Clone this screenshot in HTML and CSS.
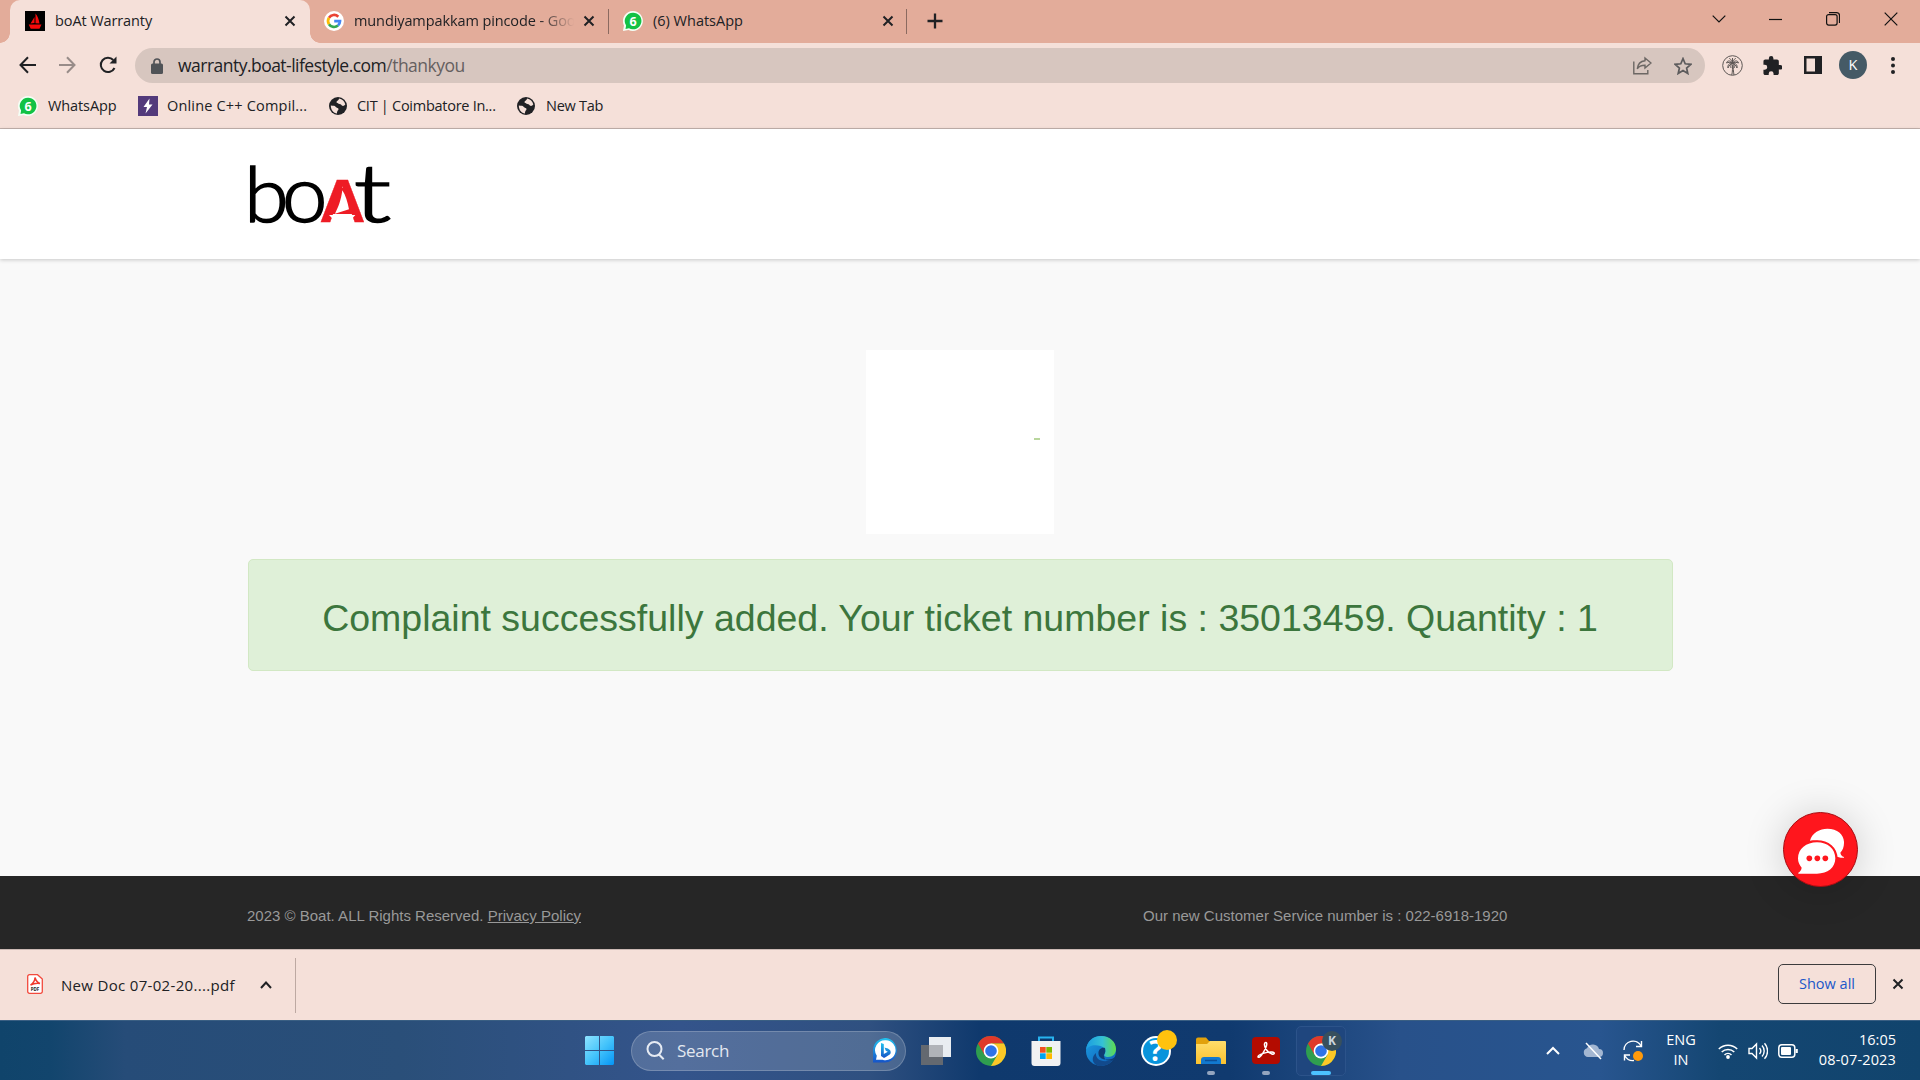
FILE: index.html
```html
<!DOCTYPE html>
<html lang="en">
<head>
<meta charset="utf-8">
<title>boAt Warranty</title>
<link rel="stylesheet" href="styles.css">
</head>
<body>
<svg class="defs" width="0" height="0" aria-hidden="true">
  <defs>
    <linearGradient id="win" x1="0" y1="0" x2="1" y2="1"><stop offset="0" stop-color="#8fe3ff"/><stop offset=".5" stop-color="#45c4fb"/><stop offset="1" stop-color="#0595f5"/></linearGradient>
    <linearGradient id="edgeA" x1="0" y1="0" x2="1" y2="0"><stop offset="0" stop-color="#1b9de2"/><stop offset=".55" stop-color="#35c1d5"/><stop offset="1" stop-color="#5fdc4b"/></linearGradient>
    <linearGradient id="edgeB" x1="0" y1="0" x2="1" y2="1"><stop offset="0" stop-color="#1b9de2"/><stop offset="1" stop-color="#0f5fb8"/></linearGradient>
    <linearGradient id="folder" x1="0" y1="0" x2="0" y2="1"><stop offset="0" stop-color="#ffdd6b"/><stop offset="1" stop-color="#fbc22f"/></linearGradient>
    <linearGradient id="bing" x1="0" y1="0" x2="0" y2="1"><stop offset="0" stop-color="#22c3ee"/><stop offset="1" stop-color="#1553c8"/></linearGradient>
    <symbol id="close" viewBox="0 0 12 12"><path d="M1.500 1.500l9 9M10.500 1.500l-9 9" stroke="currentColor" stroke-width="2" fill="none"/></symbol>
    <symbol id="wa" viewBox="0 0 20 20"><path d="M10 0a10 10 0 1 1-4.500 19L0 20l1-5.500A10 10 0 0 1 10 0z" fill="#f4fff6"/><path d="M10 1.700a8.300 8.300 0 1 1-4 15.500L2.500 18l.6-3.500A8.300 8.300 0 0 1 10 1.700z" fill="#12c245"/><text x="10" y="14.500" text-anchor="middle" font-size="12.500" font-weight="700" fill="#fff">6</text></symbol>
    <symbol id="globe" viewBox="0 0 20 20"><circle cx="10" cy="10" r="9" fill="#202124"/><path d="M2.800 9.500c3 .2 4.200.3 5 1.500.7 1.200 2.500.5 2.700 2 .1 1.300-1.500 1.500-1.500 4.600C5.500 17.200 2.800 14 2.800 9.500zM11 2.600c3.300.4 5.600 2.700 6.300 5.900-1 1.500-2.600 1.700-3.400 1-.7-.7-.9-1.500-2.400-1.500-1.200 0-1.400-1.300-2.800-1.300-.8-2 2.300-1.800 2.300-4.100z" fill="#f5e0d9"/></symbol>
    <symbol id="chrome" viewBox="0 0 30 30"><circle cx="15" cy="15" r="15" fill="#2f9e4f"/><path d="M2 7.500A15 15 0 0 1 28 7.500H15L8.500 18.800z" fill="#e0392b"/><path d="M28 7.500A15 15 0 0 1 15 30l6.500-11.300L15 7.500z" fill="#fcc827"/><circle cx="15" cy="15" r="7.400" fill="#fff"/><circle cx="15" cy="15" r="5.800" fill="#2f73e8"/></symbol>
  </defs>
</svg>

<div class="tabstrip">
  <div class="tab tab-active">
    <svg class="fav" viewBox="0 0 20 20"><path d="M0 0h20v20H0z"/><path d="M10.500 2.500v9.800l4 .3c-.4-4-2-7.600-4-10.100zM9.500 6l-4 6.500 4-.5zM3.700 13.500h12.800l-2 4.300H5.700z" fill="#f50a0a"/></svg>
    <span class="tab-title t-boat">boAt Warranty</span>
    <svg class="tab-x"><use href="#close"/></svg>
  </div>
  <div class="tab tab-google">
    <svg class="fav" viewBox="0 0 20 20"><circle cx="10" cy="10" r="10" fill="#fff"/><g fill="none" stroke-width="2.700"><path d="M5 6.800A6 6 0 0 1 14.300 5.700" stroke="#ea4335"/><path d="M5 13.200a6 6 0 0 1 0-6.400" stroke="#fbbc05"/><path d="M14 14.500A6 6 0 0 1 5 13.200" stroke="#34a853"/><path d="M10.200 10.200H16a6 6 0 0 1-2 4.300" stroke="#4285f4"/></g></svg>
    <span class="tab-title t-google">mundiyampakkam pincode - Goo</span>
    <svg class="tab-x"><use href="#close"/></svg>
  </div>
  <div class="tab tab-wa">
    <svg class="fav"><use href="#wa"/></svg>
    <span class="tab-title t-wa">(6) WhatsApp</span>
    <svg class="tab-x"><use href="#close"/></svg>
  </div>
  <svg class="plus" viewBox="0 0 16 16"><path d="M8 .5v15M.5 8h15" stroke="#202124" stroke-width="2.300"/></svg>
  <div class="win-controls">
    <svg width="14" height="8" viewBox="0 0 14 8"><path d="M.7.700L7 7 13.300.7" /></svg>
    <svg width="13" height="14" viewBox="0 0 13 14"><path d="M0 7.500h13"/></svg>
    <svg width="14" height="14" viewBox="0 0 14 14"><rect x=".6" y="2.600" width="10.500" height="10.500" rx="2"/><path d="M3 .6h7.500a3 3 0 0 1 3 3V11"/></svg>
    <svg width="14" height="14" viewBox="0 0 14 14"><path d="M.7.700l12.600 12.600M13.300.7L.7 13.300"/></svg>
  </div>
</div>

<div class="toolbar">
  <svg class="nav" width="17" height="18" viewBox="0 0 17 18"><path d="M17 9H1.500M9 1.300L1.500 9 9 16.700"/></svg>
  <svg class="nav nav-off" width="17" height="18" viewBox="0 0 17 18"><path d="M0 9h15.500M8 1.300L15.500 9 8 16.700"/></svg>
  <svg class="nav" width="18" height="18" viewBox="0 0 18 18"><path d="M15.500 12A7.200 7.200 0 1 1 14.300 4"/><path d="M17.500.5v7h-7z" fill="#202124" stroke="none"/></svg>
  <div class="omnibox">
    <svg width="12" height="16" viewBox="0 0 12 16"><rect y="5.500" width="12" height="10.500" rx="1.500" fill="#505357"/><path d="M3 6V4a3 3 0 0 1 6 0v2" fill="none" stroke="#505357" stroke-width="1.700"/></svg>
    <span class="url">warranty.boat-lifestyle.com<span class="path">/thankyou</span></span>
    <svg class="share" width="19" height="19" viewBox="0 0 19 19"><g fill="none" stroke="#6c6764" stroke-width="1.400"><path d="M.8 5.500v12.300h14V14"/><path d="M12 2l6 5-6 5V9.300c-4 0-6.200 1-7.700 3.500C4.700 8.500 7.500 5.200 12 4.700z"/></g></svg>
    <svg width="18" height="18" viewBox="0 0 18 18"><path d="M9 1.600l2.200 5.200 5.600.5-4.200 3.700 1.200 5.500L9 13.600l-4.800 2.900L5.400 11 1.200 7.300l5.600-.5z" fill="none" stroke="#5c5b5c" stroke-width="1.700"/></svg>
  </div>
  <svg class="palm" width="21" height="21" viewBox="0 0 21 21"><g fill="none" stroke="#5d5755"><circle cx="10.500" cy="10.500" r="9.800"/><path d="M9.800 20c.8-4 .8-7 .5-10.500M12 20c-.7-4-.8-7-1-10.500M10.500 8C8 5 5 5.500 4.500 8c2-1 4-.5 6 0C7 8 5.500 10 6 13c1-2.500 2.500-4 4.500-5C9 4 8 3.500 7 3.500M10.500 8c2.500-3 5.500-2.500 6 0-2-1-4-.5-6 0 3.500 0 5 2 4.500 5-1-2.500-2.500-4-4.500-5 1.500-4 2.500-4.500 3.500-4.500M10.500 8V3M10.500 8c-2 2-2 3-1.500 5M10.500 8c2 2 2 3 1.700 5"/></g></svg>
  <svg class="puzzle" width="19" height="19" viewBox="1.500 1 21 21"><path d="M20.500 11H19V7c0-1.100-.9-2-2-2h-4V3.500a2.500 2.500 0 0 0-5 0V5H4c-1.100 0-2 .9-2 2v3.800h1.500a2.700 2.700 0 0 1 0 5.400H2V20c0 1.100.9 2 2 2h3.800v-1.500a2.700 2.700 0 0 1 5.400 0V22H17c1.100 0 2-.9 2-2v-4h1.500a2.500 2.500 0 0 0 0-5z" fill="#202124"/></svg>
  <svg class="panel" width="18" height="18" viewBox="0 0 18 18"><path d="M0 0h18v18H0zM2.500 2.500v13H11v-13z" fill="#202124" fill-rule="evenodd"/></svg>
  <div class="avatar">K</div>
  <svg class="dots" width="4" height="17" viewBox="0 0 4 17"><g fill="#202124"><circle cx="2" cy="2" r="2"/><circle cx="2" cy="8.500" r="2"/><circle cx="2" cy="15" r="2"/></g></svg>
</div>

<div class="bookmarks">
  <div class="bm bm1"><svg class="bi"><use href="#wa"/></svg><span>WhatsApp</span></div>
  <div class="bm bm2"><svg class="bi" viewBox="0 0 20 20"><path d="M0 0h20v20H0z" fill="#533a7b"/><path d="M11.500 2.500L5.500 11H9l-1.500 6.500L14.500 8.500H11z" fill="#fff"/></svg><span>Online C++ Compil...</span></div>
  <div class="bm bm3"><svg class="bi"><use href="#globe"/></svg><span>CIT | Coimbatore In...</span></div>
  <div class="bm bm4"><svg class="bi"><use href="#globe"/></svg><span>New Tab</span></div>
</div>

<header class="site-header">
  <svg class="logo" width="140" height="62" viewBox="60 70 420 186">
    <text class="logo-text" y="246"><tspan x="43" font-size="230" textLength="133" lengthAdjust="spacingAndGlyphs">b</tspan><tspan x="156" font-size="236" textLength="136" lengthAdjust="spacingAndGlyphs">o</tspan><tspan class="logo-a" x="268" font-size="184" textLength="139" lengthAdjust="spacingAndGlyphs">A</tspan><tspan x="371" font-size="244" textLength="112" lengthAdjust="spacingAndGlyphs">t</tspan></text>
    <path d="M318 145h40l20 78H298z" fill="#ee1c25"/>
    <path d="M337 152c10 15 16 35 20 57l-42 13c10-20 18-40 22-70zM297 226h79l-10 11 6 12h-70l6-12z" fill="#fff"/>
  </svg>
</header>

<main class="content">
  <div class="status"><i></i></div>
  <div class="alert">Complaint successfully added. Your ticket number is : 35013459. Quantity : 1</div>
  <div class="chat">
    <svg width="46" height="46" viewBox="0 0 138 138"><path d="M36 38C42 14 66 2 88 2c32 0 51 19 50 43 0 12-4 22-11 29 1 7 5 11 11 13v2c-9 1-18-1-25-6C110 55 78 34 36 38z" fill="#fff"/><path d="M57 43c32 0 55 20 55 48s-23 46-55 46H1v-3c5-3 9-8 10-15C4 111 0 102 0 91c0-28 25-48 57-48z" fill="#fff" stroke="#ff161d" stroke-width="13" paint-order="stroke"/><g fill="#ff161d"><circle cx="34" cy="91" r="8.500"/><circle cx="58" cy="91" r="8.500"/><circle cx="82" cy="91" r="8.500"/></g></svg>
  </div>
</main>

<footer class="site-footer">
  <p class="copy">2023 © Boat. ALL Rights Reserved. <a>Privacy Policy</a></p>
  <p class="service">Our new Customer Service number is : 022-6918-1920</p>
</footer>

<div class="downloads">
  <svg class="pdf" width="16" height="20" viewBox="0 0 16 20"><path d="M2.500.7h8L15.300 5v12.500a1.800 1.800 0 0 1-1.800 1.800h-11a1.800 1.800 0 0 1-1.800-1.800v-15A1.800 1.800 0 0 1 2.500.7z" fill="#fff" stroke="#f24a3d" stroke-width="1.300"/><path d="M8 3.500c1 3.500 2 5 5 6-3-.6-6-.3-9.500 1.700C6.500 9 8 6.500 8 3.500z" fill="none" stroke="#f03a2e" stroke-width="1.500"/><text x="8" y="16.500" text-anchor="middle" font-size="4.500" font-weight="700" fill="#222">PDF</text></svg>
  <span class="dl-name">New Doc 07-02-20....pdf</span>
  <svg class="dl-up" width="12" height="8" viewBox="0 0 12 8"><path d="M1 7l5-5.500L11 7" fill="none" stroke="#202124" stroke-width="2"/></svg>
  <i class="dl-sep"></i>
  <span class="show-all">Show all</span>
  <svg class="dl-x"><use href="#close"/></svg>
</div>

<div class="taskbar">
  <svg class="start" width="29" height="29" viewBox="0 0 29 29"><path d="M1 0h13v14H0V1zM15 0h13l1 1v13H15zM0 15h14v14H1l-1-1zM15 15h14v13l-1 1H15z" fill="url(#win)"/></svg>
  <div class="search">
    <svg width="19" height="19" viewBox="0 0 19 19"><path d="M12.700 13.200l5 5M15.500 8a7 7 0 1 1-14 0 7 7 0 0 1 14 0z" fill="none" stroke="#e6ebf3" stroke-width="2"/></svg>
    <span>Search</span>
    <svg class="bing" width="25" height="25" viewBox="0 0 25 25"><path d="M13 0a12 12 0 1 1-3 24.500H0V12A12.500 12.500 0 0 1 13 0z" fill="url(#bing)"/><path d="M13 2.200a10 10 0 1 1-3.500 19.500H3l.8-4A10 10 0 0 1 13 2.200z" fill="#fff"/><path d="M8 5l2.800 1v10l4-2.300-2-.9-1.300-3.300c4 1 6.500 2.300 6.200 5.200-.2 1.500-1 2-6.700 5.300L8 18z" fill="url(#bing)"/></svg>
  </div>
  <div class="apps">
    <svg width="30" height="28" viewBox="0 0 30 28"><path d="M8 0h22v20H8z" fill="#e9edf1"/><path d="M0 8h22v20H0z" fill="#686b70" opacity=".95"/><path d="M8 8h14v12H8z" fill="#b0b3b8"/></svg>
    <svg width="30" height="30"><use href="#chrome"/></svg>
    <svg width="30" height="30" viewBox="0 0 30 30"><path d="M8 6V1.500h14V6" fill="none" stroke="#27b3ef" stroke-width="2"/><path d="M.5 5h29v22a3 3 0 0 1-3 3h-23a3 3 0 0 1-3-3z" fill="#f1f2f3"/><path d="M9 11h5.700v5.700H9z" fill="#f25022"/><path d="M15.300 11H21v5.700h-5.700z" fill="#7fba00"/><path d="M9 17.300h5.700V23H9z" fill="#00a4ef"/><path d="M15.300 17.300H21V23h-5.700z" fill="#ffb900"/></svg>
    <svg width="30" height="30" viewBox="0 0 30 30"><circle cx="15" cy="15" r="15" fill="url(#edgeB)"/><path d="M10 17c-1 7 8 11 17.500 6A15 15 0 0 1 15 30C7 30 4 22 10 17z" fill="#124a8c"/><path d="M0 14C1 5 7 0 15 0c9 0 15 6 15 13 0 5-3.500 8-8 8-3 0-4.500-1.500-3.500-3 1.500-2 1.500-6-4-8C8 8 2 10 0 14z" fill="url(#edgeA)"/><path d="M19 12c-3-1-7 1-6.500 6 .4 4 5 6 9 5.500 4 0 6-1 8-3l-2 3.500c-1.500 1-5 .5-7 .2-1.500-.7-2-2-2.500-3.700-.7-2 2.300-3.500 1-8.500z" fill="#0f3c74"/></svg>
    <svg class="help" width="36" height="36" viewBox="0 0 36 36"><circle cx="15" cy="21" r="15" fill="#fff"/><circle cx="15" cy="21" r="13" fill="#0994dc"/><text x="15" y="31" text-anchor="middle" font-size="28" font-weight="700" fill="#fff">?</text><circle cx="26" cy="10" r="10" fill="#ffc20e"/></svg>
    <div class="running"><svg width="30" height="28" viewBox="0 0 30 28"><path d="M0 2.500A2 2 0 0 1 2 .5h8l3 3.500H29v5H0z" fill="#e2a10b"/><path d="M0 7h11l3-3h15a1 1 0 0 1 1 1v22H0z" fill="url(#folder)"/><path d="M5 27v-4a3 3 0 0 1 3-3h14a3 3 0 0 1 3 3v4z" fill="#1279cf"/><path d="M9 23.500h12" stroke="#0c4f97" stroke-width="1.500"/></svg></div>
    <div class="running"><svg width="28" height="27" viewBox="0 0 28 27"><rect width="28" height="27" rx="4" fill="#b30b00"/><path d="M13.500 5.500c2.500-.3 1 5-2.500 10.500-2 3.500-5 5.500-5 3.700 0-2 9-5.200 14-4.700 3.500.5 2.500 2.600 0 2-4-1-8-6.500-7.500-10 .2-.8.500-1.500 1-1.500z" fill="none" stroke="#fff" stroke-width="1.500"/></svg></div>
    <div class="active-app"><svg width="30" height="30"><use href="#chrome"/></svg><b>K</b></div>
  </div>
  <div class="tray">
    <svg class="t-up" width="14" height="9" viewBox="0 0 14 9"><path d="M1 8l6-6 6 6"/></svg>
    <svg class="t-cloud" width="20" height="18" viewBox="0 0 20 18"><path d="M5 15a4.500 4.500 0 0 1-1-8.800A6.500 6.500 0 0 1 16 7a4 4 0 0 1 0 8z" fill="#a4b7d2" stroke="none"/><path d="M3 1l15 16" stroke-width="1.500"/></svg>
    <svg class="t-sync" width="21" height="22" viewBox="0 0 21 22"><path d="M1 10A9 9 0 0 1 18 6M18.500 1v5.500H13M7 15H1.500v5.500M2 16a9 9 0 0 0 9 4.500" stroke-width="1.400"/><circle cx="15" cy="16" r="5" fill="#ff9a0a" stroke="none"/></svg>
    <div class="lang"><span>ENG</span><span>IN</span></div>
    <svg class="t-wifi" width="20" height="16" viewBox="0 0 20 16"><path d="M.8 6a13 13 0 0 1 18.400 0M3.700 9a9 9 0 0 1 12.600 0M6.500 12a5 5 0 0 1 7 0" stroke-width="1.500"/><circle cx="10" cy="14" r="1.900" fill="#fff" stroke="none"/></svg>
    <svg class="t-vol" width="20" height="18" viewBox="0 0 20 18"><path d="M1 6.500h3L8.500 2v14L4 11.500H1zM11.500 6a4.500 4.500 0 0 1 0 6M14 3.500a8 8 0 0 1 0 11M16.500 1.200a11.500 11.500 0 0 1 0 15.600" stroke-width="1.400"/></svg>
    <svg class="t-bat" width="20" height="14" viewBox="0 0 20 14"><rect x=".8" y=".8" width="16" height="12.400" rx="3" stroke-width="1.500"/><rect x="3" y="3" width="10" height="8" rx="1" fill="#fff" stroke="none"/><path d="M18.700 5v4" stroke-width="2.200"/></svg>
    <div class="clock"><span>16:05</span><span class="date">08-07-2023</span></div>
  </div>
</div>
</body>
</html>
```
FILE: styles.css
```css
* { box-sizing: border-box; }
body { margin: 0; width: 1920px; height: 1080px; overflow: hidden; display: flex; flex-direction: column; font-family: "Open Sans", "Noto Sans", sans-serif; font-size: 14.500px; color: #202124; background: #f5e0d9; }
svg { flex: none; display: block; }
span { white-space: nowrap; }
.defs { position: absolute; }

.tabstrip { height: 43px; flex: none; display: flex; background: #e3ac9a; padding-left: 10px; }
.tab { height: 43px; display: flex; align-items: center; position: relative; padding-bottom: 1px; }
.fav { width: 20px; height: 20px; }
.tab-x { width: 12px; height: 12px; margin-left: auto; }
.tab-title { margin-left: 10px; padding-bottom: 2px; }
.t-boat { letter-spacing: -.1px; }
.tab-active { width: 300px; padding-left: 15px; padding-right: 14px; background: #f5e0d9; border-radius: 10px 10px 0 0; }
.tab-active::before, .tab-active::after { content: ""; position: absolute; bottom: 0; width: 10px; height: 10px; }
.tab-active::before { left: -10px; background: radial-gradient(circle at 0 0, transparent 9.500px, #f5e0d9 10px); }
.tab-active::after { right: -10px; background: radial-gradient(circle at 100% 0, transparent 9.500px, #f5e0d9 10px); }
.tab-google { width: 299px; padding-left: 14px; padding-right: 14px; }
.tab-wa { width: 298px; padding-left: 14px; padding-right: 13px; }
.tab-google::after, .tab-wa::after { content: ""; position: absolute; right: 0; top: 9px; width: 1px; height: 25px; background: #8b6a60; }
.t-google { width: 223px; letter-spacing: -.1px; -webkit-mask-image: linear-gradient(90deg, #000 185px, transparent 220px); mask-image: linear-gradient(90deg, #000 185px, transparent 220px); }
.plus { width: 16px; height: 16px; margin: 13px 0 0 20px; }
.win-controls { margin: 0 22px 0 auto; display: flex; gap: 44px; align-items: center; height: 37px; }
.win-controls svg { fill: none; stroke: #111; stroke-width: 1.200; }
.win-controls svg:first-child { margin-right: -1px; }

.toolbar { height: 45px; flex: none; display: flex; align-items: center; padding: 0 20px 1px 19px; }
.nav { fill: none; stroke: #202124; stroke-width: 2; margin-right: 23px; }
.nav-off { stroke: #988c89; }
.omnibox { width: 1570px; height: 35px; margin-left: -5px; margin-top: 1px; border-radius: 18px; background: #d7c6bf; display: flex; align-items: center; padding: 0 13px 0 16px; }
.url { font-size: 17.500px; letter-spacing: -.52px; margin-left: 15px; padding-bottom: 1px; }
.path { color: #65605f; }
.share { margin: 0 22px 0 auto; }
.palm { margin-left: 17px; }
.puzzle { margin-left: 20px; }
.panel { margin-left: 22px; }
.avatar { width: 28px; height: 28px; flex: none; border-radius: 50%; background: #455a66; color: #fff; text-align: center; line-height: 28px; margin-left: 17px; }
.dots { margin-left: 24px; }

.bookmarks { height: 41px; flex: none; border-bottom: 1px solid #c4b3ae; display: flex; padding: 0 0 5px 18px; align-items: center; }
.bm { display: flex; align-items: center; gap: 10px; }
.bi { width: 20px; height: 20px; }
.bm1 { width: 120px; letter-spacing: -.1px; }
.bm2 { width: 190px; gap: 9px; letter-spacing: .18px; }
.bm3 { width: 188px; gap: 9px; letter-spacing: -.27px; }
.bm4 { letter-spacing: -.25px; }

.site-header { height: 130px; flex: none; background: #fff; padding: 34px 0 0 250px; box-shadow: 0 1px 4px rgba(0,0,0,.2); z-index: 1; }
.logo { overflow: visible; }
.logo-text { font-family: Lato, "Liberation Sans", sans-serif; font-weight: 300; fill: #000; stroke: #000; stroke-width: 5; }
.logo-a { font-family: "Liberation Sans", Arial, sans-serif; font-weight: 700; fill: #ee1c25; stroke: #ee1c25; stroke-width: 1; }

.content { height: 617px; flex: none; background: #f9f9f9; position: relative; display: flex; flex-direction: column; align-items: center; padding-top: 91px; font-family: "Liberation Sans", Arial, sans-serif; }
.status { width: 188px; height: 184px; background: #fff; padding: 88px 0 0 168px; }
.status i { display: block; width: 6px; height: 2px; background: #b9d69d; }
.alert { width: 1425px; height: 112px; margin-top: 25px; background: #dff0d8; border: 1px solid #d2e8c4; border-radius: 5px; color: #3c763d; font-size: 37.500px; line-height: 116px; text-align: center; white-space: nowrap; }
.chat { position: absolute; left: 1783px; top: 553px; width: 75px; height: 75px; border-radius: 50%; background: #ff161d; border: 1px solid #a80d12; box-shadow: 0 2px 40px rgba(0,0,0,.18); padding: 15px 0 0 14px; z-index: 2; }

.site-footer { height: 73px; flex: none; background: #262626; color: #999; font-family: "Liberation Sans", Arial, sans-serif; font-size: 15px; display: flex; align-items: center; padding: 6px 0 0 247px; }
.site-footer p { margin: 0; white-space: nowrap; }
.copy { width: 896px; }
.site-footer a { text-decoration: underline; }

.downloads { height: 71px; flex: none; border-top: 1px solid #cbb9b4; display: flex; align-items: center; padding: 0 16px 0 27px; }
.pdf { margin-top: -2px; }
.dl-name { width: 174px; margin-left: 18px; font-size: 15px; letter-spacing: .32px; }
.dl-up { margin-left: 25px; }
.dl-sep { width: 1px; height: 55px; margin-left: 23px; background: #bda9a2; }
.show-all { width: 98px; height: 40px; line-height: 37px; border: 1px solid #3c3b3d; border-radius: 5px; margin: -2px 0 0 auto; text-align: center; color: #1b57c9; }
.dl-x { width: 12px; height: 12px; margin: -2px 0 0 16px; }

.taskbar { height: 60px; flex: none; display: flex; align-items: center; border-top: 1px solid #3a5f83; color: #fff; background: linear-gradient(90deg, #10446b 0, #12456d 50px, #264c78 125px, #2a4f79 400px, #34548b 680px, #2f5080 870px, #0f396d 980px, #103a6f 1230px, #28518a 1400px, #28558f 1600px, #144672 1720px, #11446d 1920px); }
.start { margin-left: 585px; }
.search { width: 275px; height: 40px; margin-left: 17px; border: 1px solid rgba(255,255,255,.2); border-radius: 20px; background: rgba(255,255,255,.16); display: flex; align-items: center; padding: 0 7px 0 14px; }
.search span { font-size: 17px; letter-spacing: -.3px; margin-left: 12px; padding-bottom: 1px; color: #e3e8f0; }
.bing { margin-left: auto; }
.apps { display: flex; align-items: center; margin-left: 15px; }
.apps > svg { margin-right: 25px; }
.apps > .help { margin: -6px 19px 0 0; }
.running { position: relative; height: 50px; display: flex; align-items: center; margin-right: 26px; }
.running::after, .active-app::after { content: ""; position: absolute; left: 50%; bottom: 1px; width: 8px; height: 4px; margin-left: -4px; border-radius: 2px; background: #94a5bf; }
.active-app { width: 50px; height: 50px; margin-left: -10px; border: 1px solid #2c538a; border-radius: 5px; background: #1f467e; position: relative; padding: 9px; }
.active-app::after { width: 20px; margin-left: -10px; bottom: 0; background: #4cc2ff; }
.active-app b { position: absolute; left: 25px; top: 4px; width: 20px; height: 20px; border-radius: 50%; background: #37505e; color: #ccd6dc; font-size: 12px; line-height: 20px; text-align: center; }
.tray { display: flex; align-items: center; margin: 0 24px 0 auto; font-size: 14.500px; }
.tray svg { fill: none; stroke: #fff; stroke-width: 2; }
.lang, .clock { display: flex; flex-direction: column; line-height: 20px; padding-bottom: 1px; }
.lang { width: 30px; margin-left: 22px; align-items: center; }
.clock { align-items: flex-end; margin-left: 20px; width: 78px; }
.date { letter-spacing: .15px; }
.t-cloud { margin-left: 23px; }
.t-sync { margin-left: 20px; }
.t-wifi { margin-left: 22px; }
.t-vol { margin-left: 10px; }
.t-bat { margin-left: 10px; }
```
